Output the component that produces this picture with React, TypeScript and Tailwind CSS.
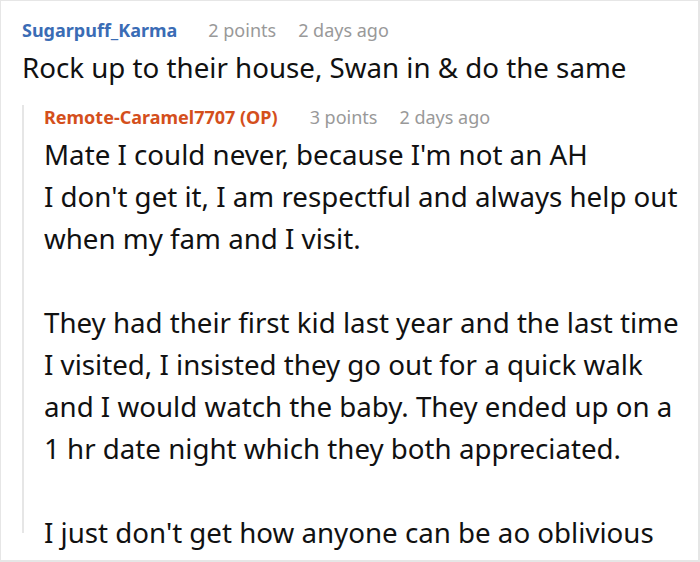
import React from 'react'

const font = { fontFamily: '"Noto Sans", "Open Sans", sans-serif' }

const replyLines = [
  "Mate I could never, because I'm not an AH",
  "I don't get it, I am respectful and always help out when my fam and I visit.",
  '',
  'They had their first kid last year and the last time I visited, I insisted they go out for a quick walk and I would watch the baby. They ended up on a 1 hr date night which they both appreciated.',
  '',
  "I just don't get how anyone can be ao oblivious",
]

export default function App() {
  return (
    <div
      className="w-[700px] h-[562px] overflow-hidden bg-white border-t border-l border-r-2 border-b-2 border-[#e6e6e6] text-[#111]"
      style={font}
    >
      <div className="pl-[21px] pt-[16.5px]">
        {/* Parent comment */}
        <div className="flex items-baseline text-[18px] leading-[24px]">
          <span className="font-bold text-[#3a6cb5]">Sugarpuff_Karma</span>
          <span className="ml-[31px] text-[#999]">2 points</span>
          <span className="ml-[22px] text-[#999]">2 days ago</span>
        </div>
        <p className="mt-[7px] text-[27.7px] leading-[36px]">
          Rock up to their house, Swan in &amp; do the same
        </p>

        {/* Reply */}
        <div className="mt-[30px] h-[428px] border-l-2 border-[#e6e6e6] pl-[20px] pr-[11px]">
          <div className="-mt-[10px] flex items-baseline text-[18px] leading-[24px]">
            <span className="font-bold text-[#d44f1c]">
              Remote-Caramel7707 (OP)
            </span>
            <span className="ml-[32px] text-[#999]">3 points</span>
            <span className="ml-[22px] text-[#999]">2 days ago</span>
          </div>
          <div className="mt-[4px] text-[27.7px] leading-[42px]">
            {replyLines.map((line, i) =>
              line ? (
                <p key={i}>{line}</p>
              ) : (
                <p key={i} className="h-[42px]" />
              )
            )}
          </div>
        </div>
      </div>
    </div>
  )
}
